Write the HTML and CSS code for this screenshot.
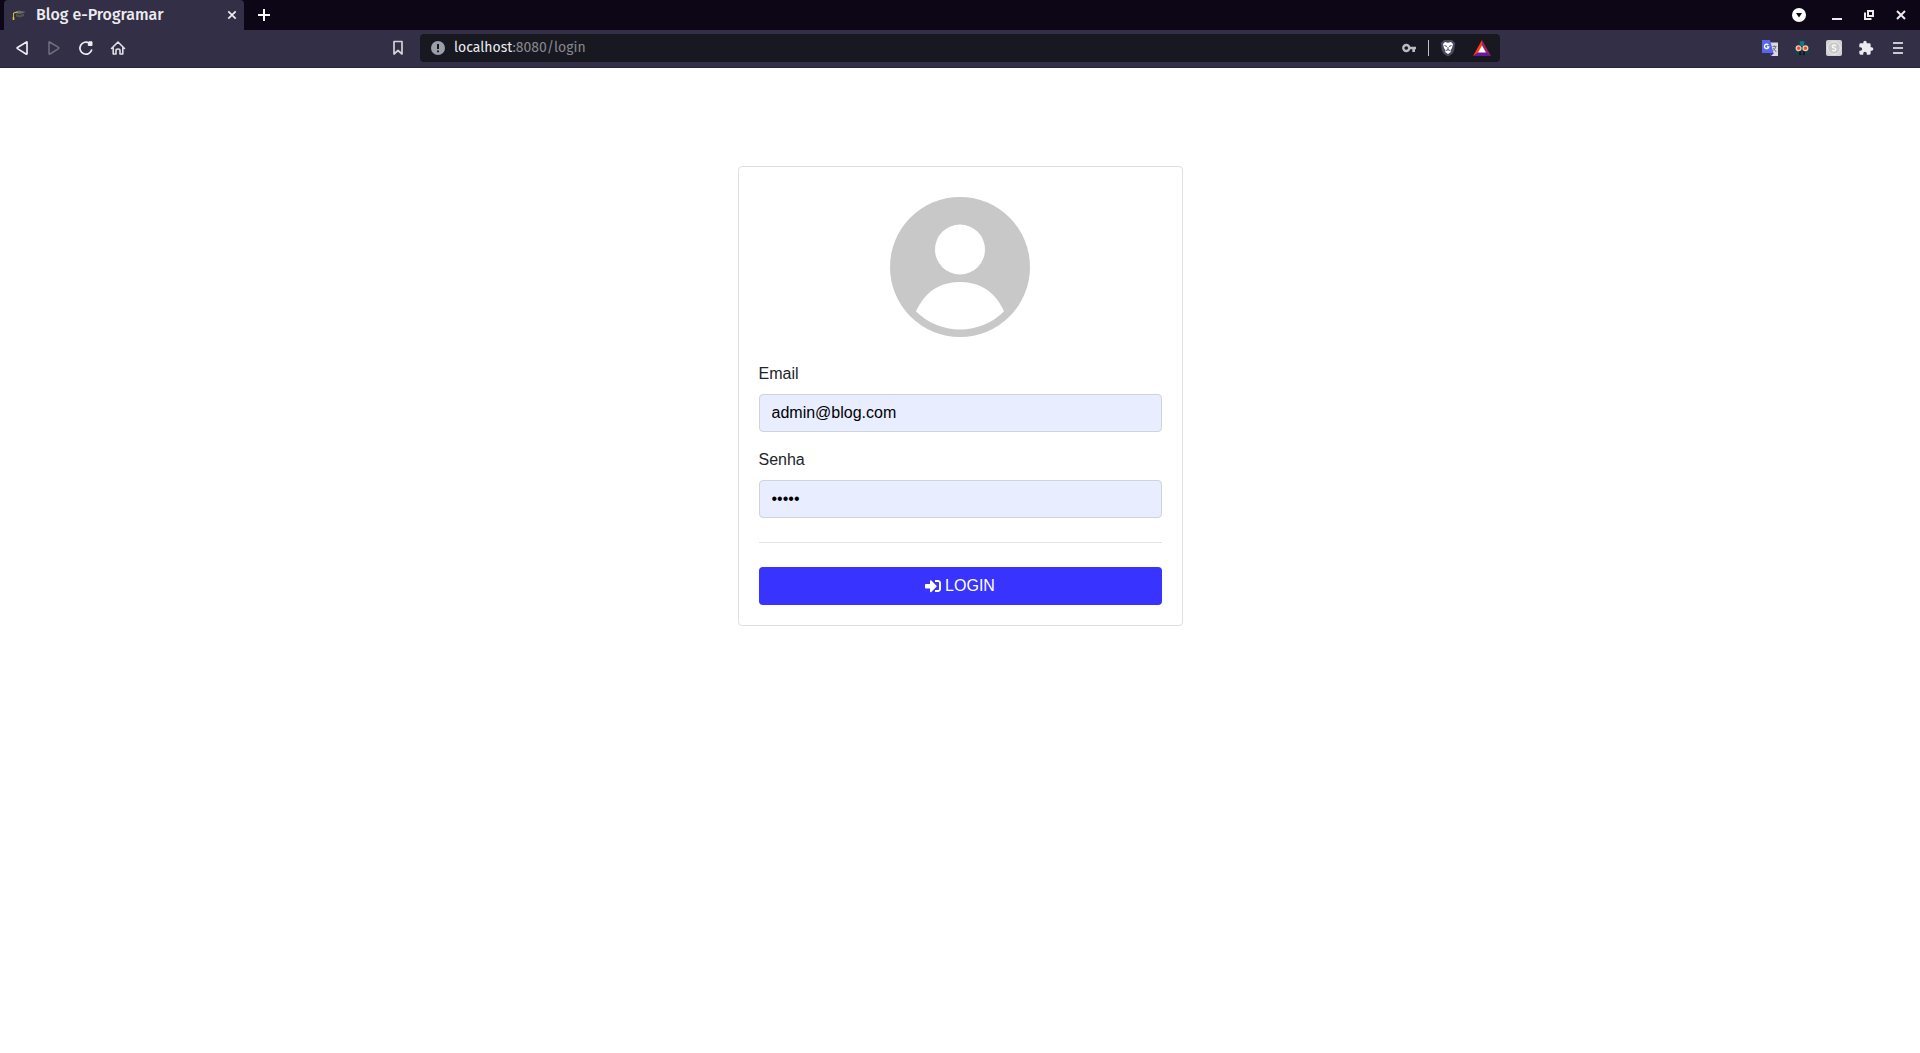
FILE: index.html
```html
<!DOCTYPE html>
<html lang="pt-BR">
<head>
<meta charset="utf-8">
<meta name="viewport" content="width=device-width, initial-scale=1">
<title>Blog e-Programar</title>
<link rel="stylesheet" href="styles.css">
</head>
<body>
<header class="browser">
  <div class="tabstrip">
    <div class="tab">
      <svg class="favicon" width="14" height="14" viewBox="0 0 14 14" aria-hidden="true"><path d="M1 4.500 L7 2.500 L14 4 L8 6 Z" fill="#6a6a66"/><path d="M4 6 L8 7.300 L12 5.500 V8 L8 9.500 L4 8.500 Z" fill="#55544f"/><path d="M1.500 11 V5 L6 4" fill="none" stroke="#c9c12f" stroke-width="1"/><path d="M.7 9 h1.600 v3 h-1.600z" fill="#d8cf2b"/></svg>
      <span class="tab-title">Blog e-Programar</span>
      <button class="tab-close" type="button" aria-label="Fechar guia"><svg width="10" height="10" viewBox="0 0 10 10"><path d="M1.300 1.300 L8.700 8.700 M8.700 1.300 L1.300 8.700" stroke="#ececf0" stroke-width="1.700"/></svg></button>
    </div>
    <button class="tool" type="button" aria-label="Nova guia"><svg width="12" height="12" viewBox="0 0 12 12"><path d="M6 0 V12 M0 6 H12" stroke="#fff" stroke-width="2"/></svg></button>
    <div class="window-controls">
      <button class="tool tool-search" type="button" aria-label="Pesquisar guias"><svg width="14" height="14" viewBox="0 0 14 14"><circle cx="7" cy="7" r="7" fill="#fff"/><path d="M4 5 H10 L7 9.500 Z" fill="#0c0616"/></svg></button>
      <button class="tool" type="button" aria-label="Minimizar"><svg width="10" height="10" viewBox="0 0 10 10"><path d="M0 8 H10 V10 H0 Z" fill="#ececf0"/></svg></button>
      <button class="tool" type="button" aria-label="Restaurar"><svg width="10" height="10" viewBox="0 0 10 10"><path d="M4 1 H9 V6 H4 Z M1 2.500 V9 H7.500" fill="none" stroke="#ececf0" stroke-width="2"/></svg></button>
      <button class="tool" type="button" aria-label="Fechar"><svg width="10" height="10" viewBox="0 0 10 10"><path d="M1 1 L9 9 M9 1 L1 9" stroke="#ececf0" stroke-width="2"/></svg></button>
    </div>
  </div>
  <div class="toolbar">
    <nav class="nav-tools" aria-label="Navegação">
      <button class="tool" type="button" aria-label="Voltar"><svg width="14" height="16" viewBox="0 0 14 16"><path d="M11.500 2 Q12 1.500 12 2.500 V13.500 Q12 14.500 11 14 L2.500 8.600 Q1.800 8 2.500 7.400 Z" fill="none" stroke="#ececf0" stroke-width="1.700" stroke-linejoin="round"/></svg></button>
      <button class="tool" type="button" aria-label="Avançar" disabled><svg width="14" height="16" viewBox="0 0 14 16"><path d="M2.500 2 Q2 1.500 2 2.500 V13.500 Q2 14.500 3 14 L11.500 8.600 Q12.200 8 11.500 7.400 Z" fill="none" stroke="#706e7e" stroke-width="1.500" stroke-linejoin="round"/></svg></button>
      <button class="tool" type="button" aria-label="Recarregar"><svg width="16" height="16" viewBox="0 0 16 16"><path d="M11.500 3.300 A6 6 0 1 0 13.800 9.500" fill="none" stroke="#ececf0" stroke-width="1.700"/><path d="M11 1.800 H14 V5.500 H10.300 V4 Z" fill="#ececf0" stroke="#ececf0" stroke-linejoin="round"/></svg></button>
      <button class="tool" type="button" aria-label="Página inicial"><svg width="16" height="16" viewBox="0 0 16 16"><path d="M1.500 8.500 L8 2 L14.500 8.500 M3.200 7.500 V14 H6 V10.500 Q6 9 8 9 Q10 9 10 10.500 V14 H12.800 V7.500" fill="none" stroke="#e0dfe4" stroke-width="1.600" stroke-linecap="round" stroke-linejoin="round"/></svg></button>
      <button class="tool bookmark" type="button" aria-label="Favoritar"><svg width="12" height="16" viewBox="0 0 12 16"><path d="M2 1.500 H10 V14 L6 10.500 L2 14 Z" fill="none" stroke="#d3d2d8" stroke-width="1.700" stroke-linejoin="round"/></svg></button>
    </nav>
    <div class="address">
      <svg class="site-info" width="14" height="14" viewBox="0 0 14 14" aria-hidden="true"><circle cx="7" cy="7" r="7" fill="#9aa0a6"/><path d="M7 3 V8 M7 9.500 V11.300" stroke="#181821" stroke-width="2"/></svg>
      <div class="url"><span class="host">localhost</span>:8080/login</div>
      <button class="address-tool key" type="button" aria-label="Senhas"><svg width="14" height="10" viewBox="0 0 14 10"><circle cx="4.300" cy="5" r="3" fill="none" stroke="#b9bbc0" stroke-width="2.400"/><path d="M7 3.700 H14 V6.300 H13 V9 H10.300 V6.300 H7 Z" fill="#b9bbc0"/></svg></button>
      <button class="address-tool brave" type="button" aria-label="Brave Shields"><svg width="16" height="18" viewBox="0 0 16 18"><path d="M4 1 H12 L15.300 4 L14 12 Q13 15 8 17.500 Q3 15 2 12 L.7 4 Z" fill="#4a4a5e"/><path d="M5 3 L8 3.700 L11 3 L13 5 L12 9 L10.500 11.500 L10.800 13 L8 15 L5.200 13 L5.500 11.500 L4 9 L3 5 Z" fill="#fff"/><path d="M4.500 6.500 L7 7.500 M11.500 6.500 L9 7.500 M8 8 V11 M6 11.500 L8 10.700 L10 11.500" stroke="#4a4a5e" fill="none"/></svg></button>
      <button class="address-tool" type="button" aria-label="Brave Rewards"><svg width="18" height="16" viewBox="0 0 18 16"><path d="M9 0 L0 16 L9 11 Z" fill="#ff3b12"/><path d="M9 0 L18 16 L9 11 Z" fill="#9e1f63"/><path d="M0 16 L9 10 L18 16 Z" fill="#6617a5"/><path d="M9 5.500 L5 12.500 H13 Z" fill="#fff"/></svg></button>
    </div>
    <div class="extensions">
      <button class="tool" type="button" aria-label="Tradutor"><svg width="16" height="16" viewBox="0 0 16 16"><path d="M6 2.500 H16 V16 H9 Z" fill="#d9dadd"/><path d="M8 13 H12 L9 16 Z" fill="#4b16b8"/><path d="M0 0 H8 L11.500 13 H0 Z" fill="#5868e8"/><path d="M6.300 5 A2.200 2.200 0 1 0 6.800 6.800 H4.800" fill="none" stroke="#fff" stroke-width="1.300"/><path d="M10.500 6.500 H14.500 M12.500 5.500 V6.500 M13.800 6.500 Q13.300 9 11.300 10.500 M11.300 8 L14.300 12" fill="none" stroke="#6f7782"/></svg></button>
      <button class="tool" type="button" aria-label="Extensão"><svg width="16" height="16" viewBox="0 0 16 16"><path d="M0 14.500 L2.300 6 Q3 .5 8 .5 Q13 .5 13.700 6 L16 14.500 L11 15.500 H5 Z" fill="#16404c"/><path d="M5.500 1.500 Q8 .5 10.500 1.500 L9.500 6 H6.500 Z" fill="#237084"/><path d="M5.500 10 H10.500 L11 15 H5 Z" fill="#101820"/><circle cx="4.600" cy="8.300" r="2.400" fill="#e4532a" stroke="#f4c9ba" stroke-width="1.300"/><circle cx="11.400" cy="8.300" r="2.400" fill="#e4532a" stroke="#f4c9ba" stroke-width="1.300"/><path d="M8 10 V14.500" stroke="#42565e"/></svg></button>
      <button class="tool" type="button" aria-label="Extensão S"><svg width="16" height="16" viewBox="0 0 16 16"><rect width="16" height="16" rx="2" fill="#d2d2d2"/><circle cx="8" cy="8" r="6.300" fill="#c9c9c9" stroke="#efefef"/><path d="M10 5.800 Q8.200 4.300 6.600 5.500 Q5.900 7.300 8 7.900 Q10.500 8.600 9.400 10.300 Q8 11.500 6 10.200" fill="none" stroke="#f7f7f7" stroke-width="1.500"/></svg></button>
      <button class="tool" type="button" aria-label="Extensões"><svg width="16" height="16" viewBox="0 0 24 24"><path d="M20.500 11H19V7a2 2 0 0 0-2-2h-4V3.500a2.500 2.500 0 0 0-5 0V5H4a2 2 0 0 0-2 2v3.800h1.500a2.700 2.700 0 0 1 0 5.400H2V20a2 2 0 0 0 2 2h3.800v-1.500a2.700 2.700 0 0 1 5.400 0V22H17a2 2 0 0 0 2-2v-4h1.500a2.500 2.500 0 0 0 0-5z" fill="#ececf0"/></svg></button>
      <button class="tool" type="button" aria-label="Menu"><svg width="10" height="12" viewBox="0 0 10 12"><path d="M0 1 H10 M0 6 H10 M0 11 H10" stroke="#c9c8cf" stroke-width="2"/></svg></button>
    </div>
  </div>
</header>
<main class="page">
  <form class="card">
    <svg class="avatar" width="140" height="140" viewBox="0 0 140 140" aria-hidden="true"><circle cx="70" cy="70" r="70" fill="#c8c8c8"/><circle cx="70" cy="52.500" r="25" fill="#fff"/><path d="M26 114.500 C34 96 49 85 70 85 C91 85 106 96 114 114.500 C102 126 87 132.500 70 132.500 C53 132.500 38 126 26 114.500 Z" fill="#fff"/></svg>
    <div class="field">
      <label for="email">Email</label>
      <input id="email" type="email" value="admin@blog.com">
    </div>
    <div class="field">
      <label for="senha">Senha</label>
      <input id="senha" type="password" value="admin">
    </div>
    <hr class="divider">
    <button class="login" type="submit"><svg width="16" height="16" viewBox="0 0 512 512" aria-hidden="true"><path fill="#fff" d="M416 448h-84c-6.600 0-12-5.400-12-12v-40c0-6.600 5.400-12 12-12h84c17.700 0 32-14.300 32-32V160c0-17.700-14.300-32-32-32h-84c-6.600 0-12-5.400-12-12V76c0-6.600 5.400-12 12-12h84c53 0 96 43 96 96v192c0 53-43 96-96 96zm-47-201L201 79c-15-15-41-4.500-41 17v96H24c-13.300 0-24 10.700-24 24v96c0 13.300 10.700 24 24 24h136v96c0 21.500 26 32 41 17l168-168c9.300-9.400 9.300-24.600 0-34z"/></svg>LOGIN</button>
  </form>
</main>
</body>
</html>
```
FILE: styles.css
```css
* {
  box-sizing: border-box;
}

body {
  margin: 0;
  background: #fff;
  color: #212529;
  font-family: "Liberation Sans", Arial, sans-serif;
  font-size: 16px;
  line-height: 24px;
}

button {
  border: 0;
  padding: 0;
  background: none;
  font: inherit;
}

.browser {
  font-family: "Fira Sans", "Noto Sans", sans-serif;
  color: #ececf0;
}

.tabstrip {
  display: flex;
  height: 30px;
  padding: 0 3px 0 4px;
  background: #0c0616;
}

.tab {
  display: flex;
  align-items: center;
  width: 240px;
  padding: 0 4px 0 8px;
  border-radius: 4px 4px 0 0;
  background: #332f46;
}

.tab-title {
  flex: 1;
  margin-left: 10px;
  font-size: 16px;
  font-weight: 500;
  white-space: nowrap;
}

.tab-close {
  display: flex;
  align-items: center;
  justify-content: center;
  width: 16px;
  height: 16px;
}

.tool {
  display: flex;
  align-items: center;
  justify-content: center;
  width: 32px;
  height: 30px;
}

.tab + .tool {
  margin-left: 4px;
}

.window-controls {
  display: flex;
  margin-left: auto;
}

.tool-search {
  margin-right: 6px;
}

.toolbar {
  display: grid;
  grid-template-columns: 1fr 56.25% 1fr;
  align-items: center;
  height: 38px;
  padding-bottom: 1px;
  border-bottom: 1px solid #2b273b;
  background: #332f46;
}

.nav-tools,
.extensions {
  display: flex;
  padding: 0 6px;
}

.bookmark {
  margin-left: auto;
}

.extensions {
  justify-content: flex-end;
}

.address {
  display: flex;
  align-items: center;
  height: 28px;
  padding: 0 8px 0 11px;
  border-radius: 4px;
  background: #181821;
}

.url {
  flex: 1;
  margin-left: 9px;
  color: #87878d;
  font-size: 14px;
}

.host {
  color: #ececf0;
}

.address-tool {
  display: flex;
  align-items: center;
  justify-content: center;
  width: 20px;
  height: 20px;
}

.key {
  margin-right: 9px;
}

.brave {
  width: 38px;
  height: 16px;
  margin-right: 6px;
  border-left: 1px solid #c0c0c4;
}

.page {
  display: flex;
  justify-content: center;
  padding: 98px 16px 32px;
}

.card {
  width: 100%;
  max-width: 445px;
  padding: 20px;
  border: 1px solid #dfdfdf;
  border-radius: 4px;
}

.avatar {
  display: block;
  margin: 10px auto 25px;
}

.field {
  margin-bottom: 16px;
}

.field label {
  display: block;
  margin-bottom: 8px;
}

.field input {
  display: block;
  width: 100%;
  height: 38px;
  padding: 6px 12px;
  border: 1px solid #ced4da;
  border-radius: 4px;
  background: #e8edff;
  color: #000;
  font: inherit;
}

.divider {
  height: 1px;
  margin: 24px 0;
  border: 0;
  background: #e3e3e3;
}

.login {
  display: flex;
  align-items: center;
  justify-content: center;
  gap: 4px;
  width: 100%;
  height: 38px;
  border-radius: 4px;
  background: #3833ff;
  color: #fff;
}
```
